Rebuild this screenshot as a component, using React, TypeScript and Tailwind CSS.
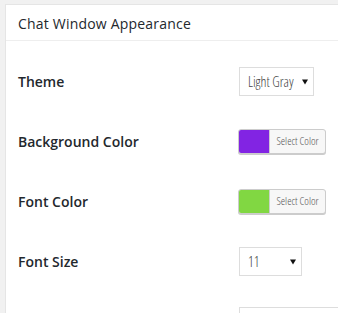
import React from "react";

const condensed = "font-['Open_Sans',sans-serif] [font-stretch:75%] font-light";

function FakeSelect({ value, width }: { value: string; width: string }) {
  return (
    <div
      className={`flex h-[29px] ${width} items-center justify-between border border-[#dddddd] bg-white pl-[8px] pr-[5px] text-[14px] text-[#444] ${condensed}`}
    >
      <span>{value}</span>
      <svg width="6" height="6" viewBox="0 0 6 6" className="mt-px">
        <path d="M0 0.5h6L3 5.5z" fill="#111" />
      </svg>
    </div>
  );
}

function ColorButton({ color }: { color: string }) {
  return (
    <div className="-ml-px flex h-[25px] w-[88px] overflow-hidden rounded-[3px] border border-[#cccccc] bg-[#f7f7f7] shadow-[0_1px_0_#ccc]">
      <span className="w-[30px] shrink-0" style={{ backgroundColor: color }} />
      <span
        className={`flex flex-1 items-center justify-center border-l border-[#cccccc] text-[11px] text-[#555] ${condensed}`}
      >
        Select Color
      </span>
    </div>
  );
}

const rows: { label: string; control: React.ReactNode }[] = [
  { label: "Theme", control: <FakeSelect value="Light Gray" width="w-[75px]" /> },
  { label: "Background Color", control: <ColorButton color="#8224e3" /> },
  { label: "Font Color", control: <ColorButton color="#81d742" /> },
  { label: "Font Size", control: <FakeSelect value="11" width="w-[63px]" /> },
  {
    label: "",
    control: <div className="h-[29px] w-[160px] border border-[#dddddd] bg-white" />,
  },
];

export default function App() {
  return (
    <div className="h-[313px] w-[338px] overflow-hidden bg-[#f1f1f1] pl-[5px] pt-[4px] font-['Open_Sans',sans-serif]">
      <div className="w-[420px] border border-[#e5e5e5] bg-white">
        <div className="flex h-[36px] items-center border-b border-[#eeeeee] px-[12px] pt-px">
          <h2 className="text-[14px] font-medium text-[#23282d] tracking-[0.2px]">
            Chat Window Appearance
          </h2>
        </div>
        <div className="pt-[10px]">
          {rows.map((r, i) => (
            <div key={i} className="flex h-[60px] items-center px-[12px]">
              <div className="w-[221px] text-[14px] font-semibold text-[#23282d]">{r.label}</div>
              {r.control}
            </div>
          ))}
        </div>
      </div>
    </div>
  );
}
